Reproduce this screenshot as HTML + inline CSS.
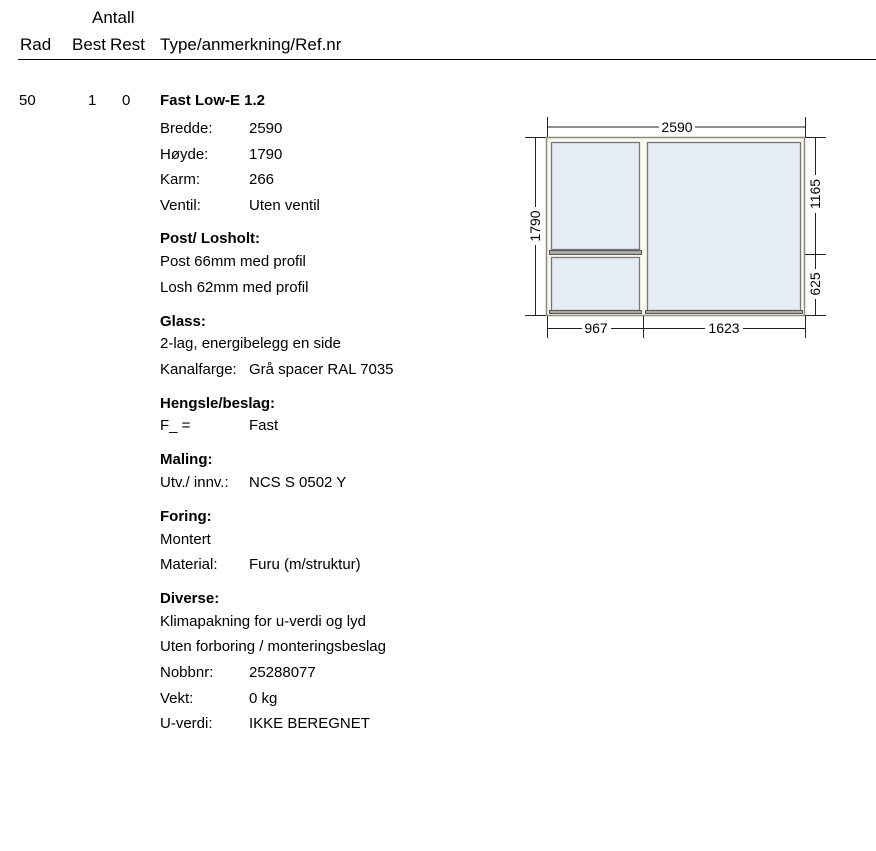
<!DOCTYPE html>
<html><head><meta charset="utf-8"><style>
body{margin:0;width:876px;height:851px;background:#fff;font-family:"Liberation Sans",Arial,sans-serif;color:#000;position:relative;overflow:hidden}
.t{position:absolute;white-space:nowrap;line-height:18px;font-size:15px}
.h{font-size:17px}
b{font-weight:bold}
</style></head><body>
<div class="t h" style="left:92px;top:9px">Antall</div>
<div class="t h" style="left:20px;top:36px">Rad</div>
<div class="t h" style="left:72px;top:36px">Best</div>
<div class="t h" style="left:110px;top:36px">Rest</div>
<div class="t h" style="left:160px;top:36px">Type/anmerkning/Ref.nr</div>
<div style="position:absolute;left:18px;top:59px;width:858px;height:1px;background:#000"></div>

<div class="t" style="left:19px;top:92px">50</div>
<div class="t" style="left:88px;top:92px">1</div>
<div class="t" style="left:122px;top:92px">0</div>
<div class="t" style="left:160px;top:92px"><b>Fast Low-E 1.2</b></div>

<div class="t" style="left:160px;top:120px">Bredde:</div><div class="t" style="left:249px;top:120px">2590</div>
<div class="t" style="left:160px;top:146px">Høyde:</div><div class="t" style="left:249px;top:146px">1790</div>
<div class="t" style="left:160px;top:171px">Karm:</div><div class="t" style="left:249px;top:171px">266</div>
<div class="t" style="left:160px;top:197px">Ventil:</div><div class="t" style="left:249px;top:197px">Uten ventil</div>
<div class="t" style="left:160px;top:230px"><b>Post/ Losholt:</b></div>
<div class="t" style="left:160px;top:253px">Post 66mm med profil</div>
<div class="t" style="left:160px;top:279px">Losh 62mm med profil</div>
<div class="t" style="left:160px;top:313px"><b>Glass:</b></div>
<div class="t" style="left:160px;top:335px">2-lag, energibelegg en side</div>
<div class="t" style="left:160px;top:361px">Kanalfarge:</div><div class="t" style="left:249px;top:361px">Grå spacer RAL 7035</div>
<div class="t" style="left:160px;top:395px"><b>Hengsle/beslag:</b></div>
<div class="t" style="left:160px;top:417px">F_ =</div><div class="t" style="left:249px;top:417px">Fast</div>
<div class="t" style="left:160px;top:451px"><b>Maling:</b></div>
<div class="t" style="left:160px;top:474px">Utv./ innv.:</div><div class="t" style="left:249px;top:474px">NCS S 0502 Y</div>
<div class="t" style="left:160px;top:508px"><b>Foring:</b></div>
<div class="t" style="left:160px;top:531px">Montert</div>
<div class="t" style="left:160px;top:556px">Material:</div><div class="t" style="left:249px;top:556px">Furu (m/struktur)</div>
<div class="t" style="left:160px;top:590px"><b>Diverse:</b></div>
<div class="t" style="left:160px;top:613px">Klimapakning for u-verdi og lyd</div>
<div class="t" style="left:160px;top:638px">Uten forboring / monteringsbeslag</div>
<div class="t" style="left:160px;top:664px">Nobbnr:</div><div class="t" style="left:249px;top:664px">25288077</div>
<div class="t" style="left:160px;top:690px">Vekt:</div><div class="t" style="left:249px;top:690px">0 kg</div>
<div class="t" style="left:160px;top:715px">U-verdi:</div><div class="t" style="left:249px;top:715px">IKKE BEREGNET</div>

<svg style="position:absolute;left:0;top:0" width="876" height="851">
<g fill="none" stroke="#222" stroke-width="1">
<line x1="547" y1="127" x2="805" y2="127"/><line x1="547.5" y1="117" x2="547.5" y2="137"/><line x1="805.5" y1="117" x2="805.5" y2="137"/>
<line x1="535.5" y1="137" x2="535.5" y2="315"/><line x1="525" y1="137.5" x2="546" y2="137.5"/><line x1="525" y1="315.5" x2="546" y2="315.5"/>
<line x1="815.5" y1="137" x2="815.5" y2="315"/><line x1="805" y1="137.5" x2="826" y2="137.5"/><line x1="805" y1="254.5" x2="826" y2="254.5"/><line x1="805" y1="315.5" x2="826" y2="315.5"/>
<line x1="547" y1="328.5" x2="805" y2="328.5"/><line x1="547.5" y1="316" x2="547.5" y2="338"/><line x1="643.5" y1="316" x2="643.5" y2="338"/><line x1="805.5" y1="316" x2="805.5" y2="338"/>
</g>
<rect x="546.5" y="137.5" width="258" height="178" fill="#fbf9ee" stroke="#8a8a80" stroke-width="1.5"/>
<rect x="551.5" y="142.5" width="88" height="107" fill="#e6ecf3" stroke="#777" stroke-width="1.3"/>
<rect x="551.5" y="257.5" width="88" height="53" fill="#e6ecf3" stroke="#777" stroke-width="1.3"/>
<rect x="647.5" y="142.5" width="153" height="168" fill="#e6ecf3" stroke="#777" stroke-width="1.3"/>
<rect x="549.5" y="250.5" width="92" height="4" fill="#aaa" stroke="#555"/>
<rect x="549.5" y="310.5" width="92" height="3" fill="#aaa" stroke="#555"/>
<rect x="645.5" y="310.5" width="157" height="3" fill="#aaa" stroke="#555"/>
<g font-family="Liberation Sans, Arial, sans-serif" font-size="14" fill="#000" text-anchor="middle">
<rect x="659" y="120" width="36" height="14" fill="#fff"/><text x="677" y="132">2590</text>
<rect x="582" y="321" width="29" height="14" fill="#fff"/><text x="596" y="333">967</text>
<rect x="705" y="321" width="38" height="14" fill="#fff"/><text x="724" y="333">1623</text>
<rect x="528" y="207" width="14" height="38" fill="#fff"/><text transform="translate(540,226) rotate(-90)">1790</text>
<rect x="808" y="175" width="14" height="38" fill="#fff"/><text transform="translate(820,194) rotate(-90)">1165</text>
<rect x="808" y="269" width="14" height="30" fill="#fff"/><text transform="translate(820,284) rotate(-90)">625</text>
</g>
</svg>
</body></html>
